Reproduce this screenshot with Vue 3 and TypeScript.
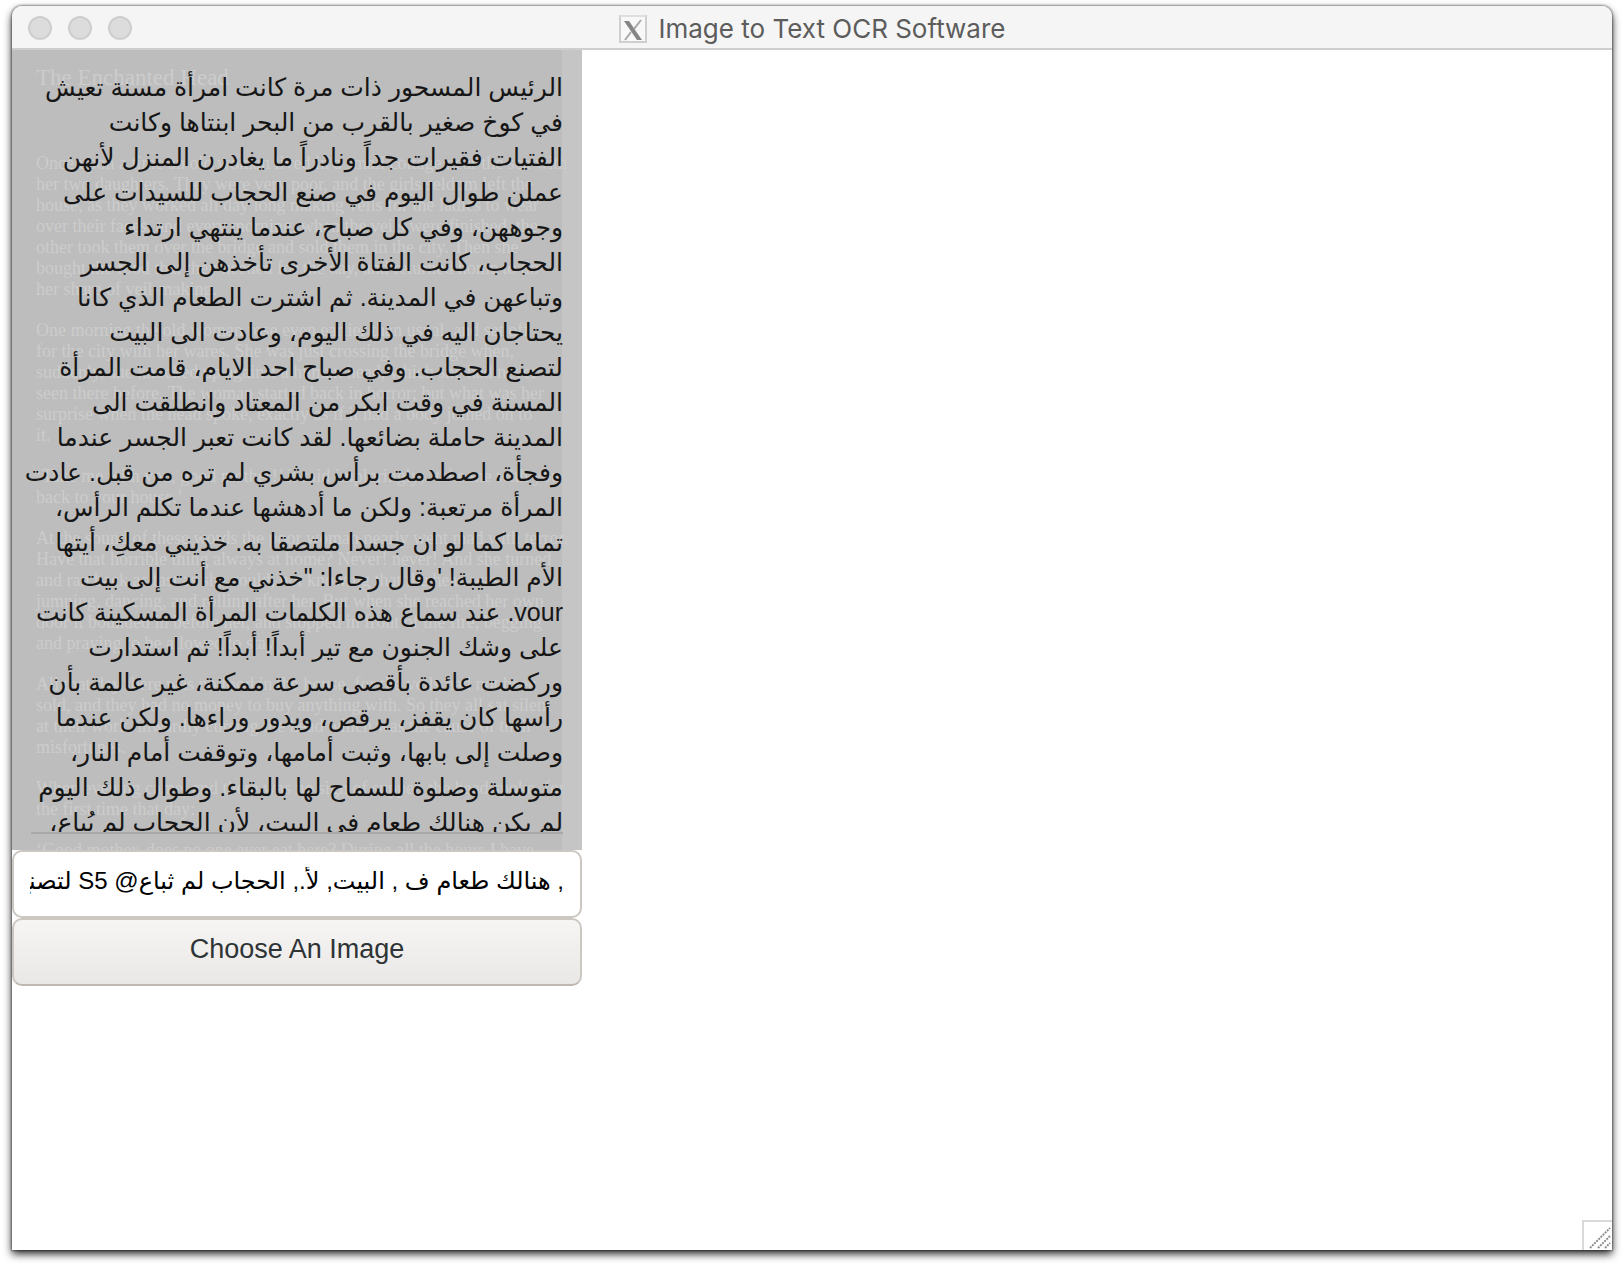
<script setup lang="ts">
import { ref } from 'vue'

const title = 'Image to Text OCR Software'
const entry = ref(', هنالك طعام ف , البيت, لأ., الحجاب لم ثباع@ S5 لتصنع')

const story: string[][] = [
  [
    'Once upon a time an old woman lived in a small cottage near the sea with',
    'her two daughters. They were very poor, and the girls seldom left the',
    'house, as they worked all day long making veils for the ladies to wear',
    'over their faces, and every morning, when the veils were finished, the',
    'other took them over the bridge and sold them in the city. Then she',
    'bought the food that they needed for the day, and returned home to do',
    'her share of veil-making.',
  ],
  [
    'One morning the old woman rose even earlier than usual, and set off',
    'for the city with her wares. She was just crossing the bridge when,',
    'suddenly, she knocked up against a human head, which she had never',
    'seen there before. The woman started back in horror; but what was her',
    'surprise when the head spoke, exactly as if it had a body joined on to',
    'it.',
  ],
  [
    '‘Take me with you, good mother!’ it said imploringly; ‘take me with you',
    'back to your house.’',
  ],
  [
    'At the sound of these words the poor woman nearly went mad with terror.',
    'Have that horrible thing always at home? Never! never! And she turned',
    'and ran back as fast as she could, not knowing that the head was',
    'jumping, dancing, and rolling after her. But when she reached her own',
    'door it bounded in before her, and stopped in front of the fire, begging',
    'and praying to be allowed to stay.',
  ],
  [
    'All that day there was no food in the house, for the veils had not been',
    'sold, and they had no money to buy anything with. So they all sat silent',
    'at their work, inwardly cursing the head which was the cause of their',
    'misfortunes.',
  ],
  [
    'When evening came, and there was no sign of supper, the head spoke, for',
    'the first time that day:',
  ],
  ['‘Good mother, does no one ever eat here? During all the hours I have'],
]

const translation: string[] = [
  'الرئيس المسحور ذات مرة كانت امرأة مسنة تعيش',
  'في كوخ صغير بالقرب من البحر ابنتاها وكانت',
  'الفتيات فقيرات جداً ونادراً ما يغادرن المنزل لأنهن',
  'عملن طوال اليوم في صنع الحجاب للسيدات على',
  'وجوههن، وفي كل صباح، عندما ينتهي ارتداء',
  'الحجاب، كانت الفتاة الأخرى تأخذهن إلى الجسر',
  'وتباعهن في المدينة. ثم اشترت الطعام الذي كانا',
  'يحتاجان اليه في ذلك اليوم، وعادت الى البيت',
  'لتصنع الحجاب. وفي صباح احد الايام، قامت المرأة',
  'المسنة في وقت ابكر من المعتاد وانطلقت الى',
  'المدينة حاملة بضائعها. لقد كانت تعبر الجسر عندما',
  'وفجأة، اصطدمت برأس بشري لم تره من قبل. عادت',
  'المرأة مرتعبة: ولكن ما أدهشها عندما تكلم الرأس،',
  'تماما كما لو ان جسدا ملتصقا به. خذيني معكِ، أيتها',
  'الأم الطيبة! \'وقال رجاءا: "خذني مع أنت إلى بيت',
  'vour. عند سماع هذه الكلمات المرأة المسكينة كانت',
  'على وشك الجنون مع تير أبداً! أبداً! ثم استدارت',
  'وركضت عائدة بأقصى سرعة ممكنة، غير عالمة بأن',
  'رأسها كان يقفز، يرقص، ويدور وراءها. ولكن عندما',
  'وصلت إلى بابها، وثبت أمامها، وتوقفت أمام النار،',
  'متوسلة وصلوة للسماح لها بالبقاء. وطوال ذلك اليوم',
  'لم يكن هنالك طعام في البيت، لأن الحجاب لم يُباع،',
]
</script>

<template>
  <div class="desktop">
    <main class="window">
      <header class="titlebar">
        <div class="lights">
          <button type="button" aria-label="Close"></button>
          <button type="button" aria-label="Minimize"></button>
          <button type="button" aria-label="Zoom"></button>
        </div>
        <h1 class="title">
          <svg width="28" height="28" viewBox="0 0 28 28" aria-hidden="true">
            <rect x="1" y="1" width="26" height="26" fill="#f8f8f8" stroke="#cfcfcf" stroke-width="2" />
            <path d="M1 1h26" stroke="#dedede" stroke-width="2" />
            <path d="M5 6h5l13 19h-5z" fill="#858585" />
            <path d="M22 5 15 14M12 17 6 25" stroke="#a6a6a6" stroke-width="2" fill="none" />
          </svg>
          <span>{{ title }}</span>
        </h1>
      </header>
      <div class="content">
        <section class="tool">
          <div class="preview">
            <div class="page" aria-hidden="true">
              <h2>The Enchanted Head</h2>
              <p v-for="(para, p) in story" :key="p">
                <span v-for="(line, l) in para" :key="l">{{ line }}</span>
              </p>
            </div>
            <div class="translated" dir="rtl" lang="ar">
              <span v-for="(line, i) in translation" :key="i">{{ line }}</span>
            </div>
          </div>
          <input v-model="entry" class="entry" type="text" dir="rtl" aria-label="Recognized text" />
          <button class="choose" type="button">Choose An Image</button>
        </section>
        <div class="grip">
          <svg width="28" height="28" viewBox="0 0 28 28" aria-hidden="true">
            <path d="M6 26 26 6M14 26 26 14M21 26 26 21" stroke="#8c8c8c" stroke-width="2" stroke-dasharray="2 1" />
          </svg>
        </div>
      </div>
    </main>
  </div>
</template>

<style>
body {
  margin: 0;
  background: #fff;
}
</style>

<style scoped>
* {
  box-sizing: border-box;
}
.desktop {
  display: flex;
  min-height: 100vh;
  padding: 6px 12px 18px;
  overflow: hidden;
}
.window {
  display: flex;
  flex: 1;
  flex-direction: column;
  min-width: 0;
  border-radius: 10px 10px 0 0;
  background: #fff;
  box-shadow: 0 0 2px 1px rgba(0, 0, 0, 0.35), 0 4px 8px rgba(0, 0, 0, 0.85);
}
.titlebar {
  display: grid;
  grid-template-columns: 1fr auto 1fr;
  align-items: center;
  height: 44px;
  padding: 0 16px;
  border-bottom: 2px solid #cecece;
  border-radius: 10px 10px 0 0;
  background: #f5f5f5;
}
.lights {
  display: flex;
  gap: 16px;
  padding-top: 2px;
}
.lights button {
  width: 24px;
  height: 24px;
  padding: 0;
  border: 2px solid #cecece;
  border-radius: 50%;
  background: #dcdcdc;
}
.title {
  display: flex;
  align-items: center;
  gap: 12px;
  margin: 0;
  padding-top: 4px;
  color: #5c5c5c;
  font: 400 26px/32px Inter, sans-serif;
  white-space: nowrap;
}
.content {
  display: flex;
  flex: 1;
  justify-content: space-between;
}
.tool {
  display: flex;
  flex-direction: column;
  width: 570px;
}
.preview {
  display: grid;
  grid-template-columns: 1fr;
  height: 800px;
  overflow: hidden;
  background: linear-gradient(to right, #bdbdbd 550px, #c5c5c5 550px);
}
.page,
.translated {
  grid-area: 1 / 1;
  min-width: 0;
  white-space: nowrap;
}
.page {
  height: 800px;
  padding: 14px 0 0 24px;
  color: #cccccc;
  font: 18px/21px "Liberation Serif", serif;
}
.page h2 {
  margin: 0 0 61px;
  font-size: 23px;
  font-weight: 400;
  line-height: 28px;
}
.page p {
  margin: 0 0 20px;
}
.page span,
.translated span {
  display: block;
}
.translated {
  height: 764px;
  margin: 20px 19px 0;
  overflow-x: visible;
  overflow-y: clip;
  border-bottom: 2px solid #a9a9a9;
  color: #161616;
  font: 25px/35px "Liberation Sans", "DejaVu Sans", sans-serif;
}
.entry {
  width: 100%;
  height: 68px;
  padding: 0 16px 6px;
  border: 2px solid #cdc7c2;
  border-radius: 10px;
  outline: 0;
  background: #fff;
  color: #000;
  font: 24px "Liberation Sans", "DejaVu Sans", sans-serif;
}
.choose {
  height: 68px;
  padding: 0 0 6px;
  border: 2px solid #cdc7c2;
  border-bottom-color: #bfb8b1;
  border-radius: 10px;
  background: linear-gradient(#f6f5f4, #eae8e6);
  color: #2e3436;
  font: 27px "Liberation Sans", sans-serif;
}
.grip {
  display: flex;
  align-self: flex-end;
  width: 30px;
  height: 30px;
  border: solid #d9d9d9;
  border-width: 2px 0 0 2px;
}
</style>
